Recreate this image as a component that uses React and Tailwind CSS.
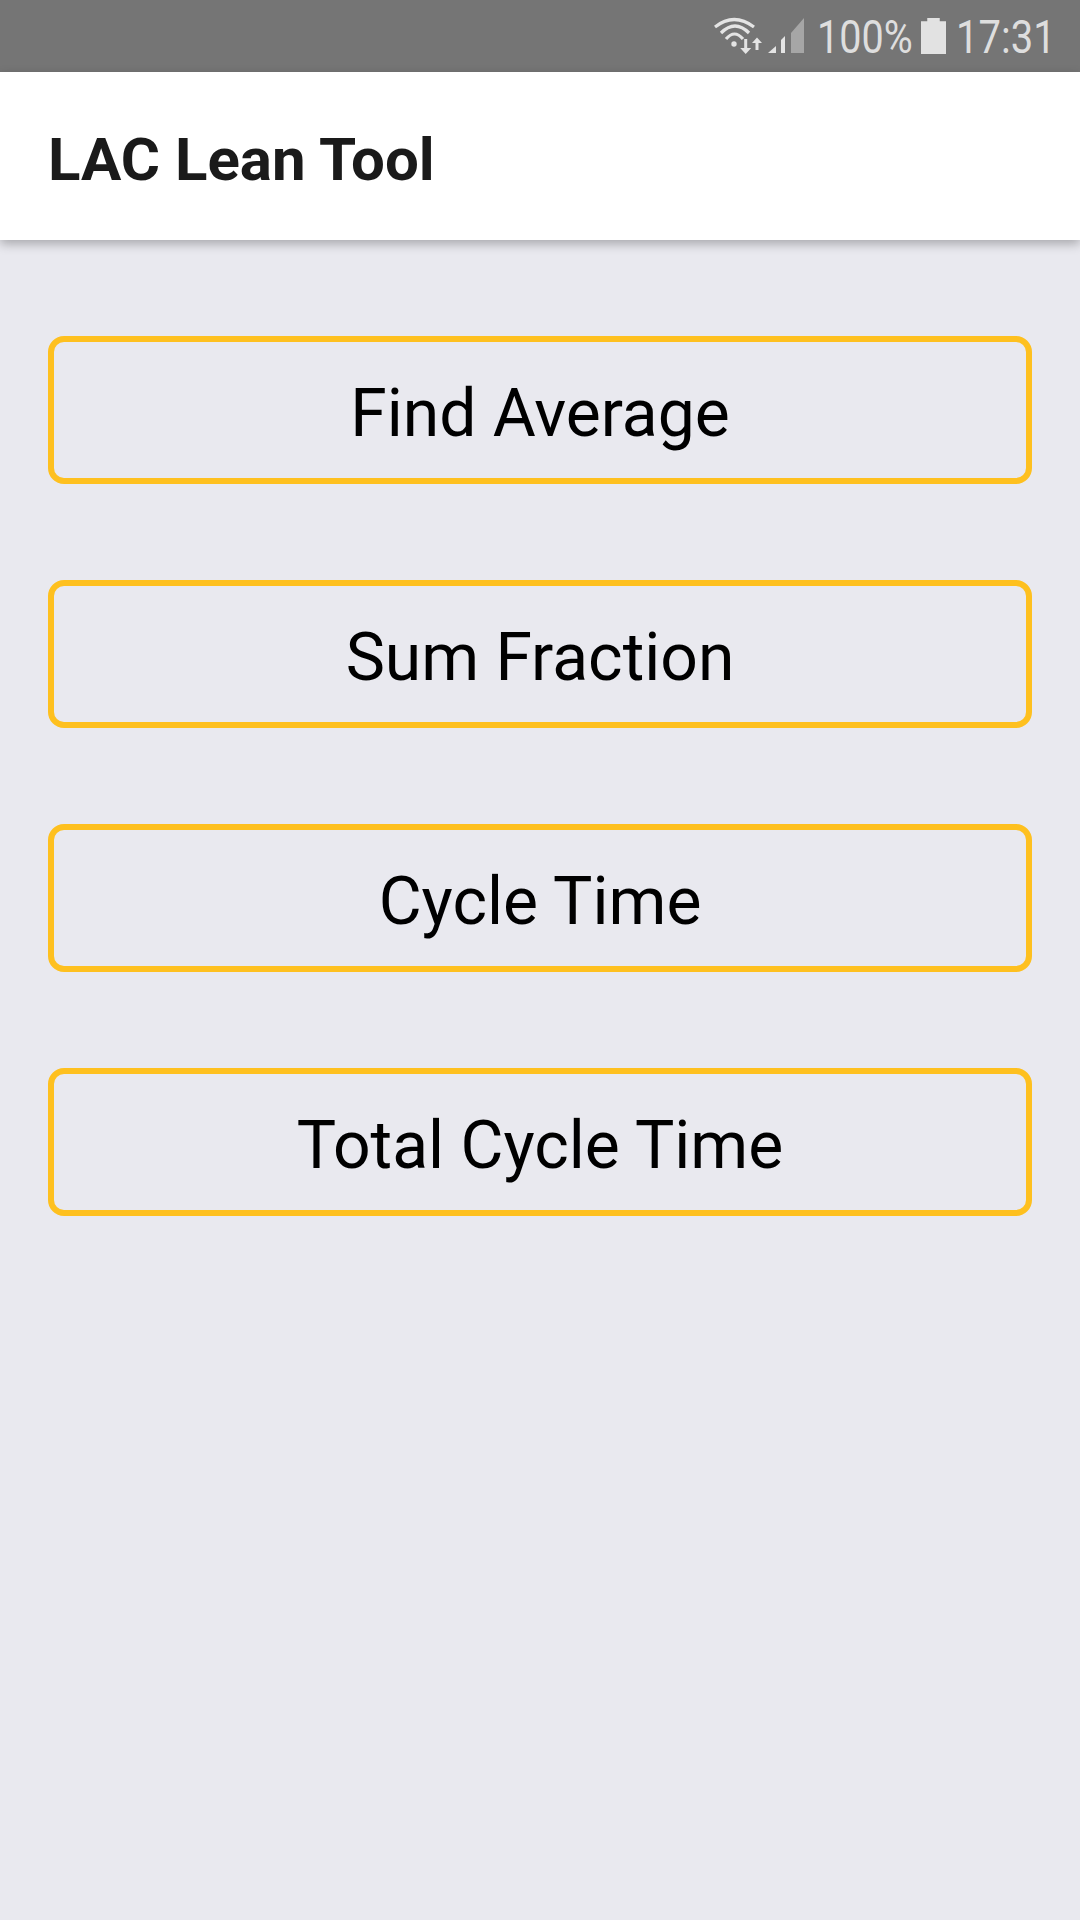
const items = ["Find Average", "Sum Fraction", "Cycle Time", "Total Cycle Time"];

function StatusIcons() {
  return (
    <svg width="93" height="38" viewBox="0 0 93 38" fill="none" className="mr-[12px] shrink-0">
      {/* wifi arcs */}
      <path d="M3 10 Q22 -5 42 10" stroke="#e4e4e4" strokeWidth="3.2" />
      <path d="M9 16 Q23 2 37 16" stroke="#e4e4e4" strokeWidth="3.2" />
      <path d="M14 22 Q22.5 12 31 22" stroke="#e4e4e4" strokeWidth="3.2" />
      <circle cx="22" cy="27" r="2.7" fill="#e4e4e4" />
      {/* data arrows */}
      <path d="M32.2 22 h3 v9 h4 l-5.5 6 l-5.5 -6 h4 z" fill="#e4e4e4" />
      <path d="M46.5 33 h-3 v-7 h-3.5 l5 -5.5 l5 5.5 h-3.5 z" fill="#e4e4e4" />
      {/* signal */}
      <path d="M56 36 L64 29 V36 Z" fill="#e4e4e4" />
      <path d="M69 23 L73 19 V36 H69 Z" fill="#e4e4e4" />
      <path d="M79 16 L92 1 V36 H79 Z" fill="#a6a6a6" />
    </svg>
  );
}

export default function App() {
  return (
    <div className="min-h-[1920px] w-[1080px] bg-[#e9e9ef]" style={{ fontFamily: "Roboto, sans-serif" }}>
      <div className="flex h-[72px] items-center justify-end bg-[#757575] pr-[30px] text-[#dedede]">
        <StatusIcons />
        <span className="inline-block w-[96px] origin-left scale-x-[0.86] whitespace-nowrap pt-[2px] text-[46px] font-normal leading-none">100%</span>
        <div className="mr-[10px] ml-[8px] h-[36px] w-[25px] shrink-0 bg-[#e2e2e2] [clip-path:polygon(25%_0,75%_0,75%_9%,100%_9%,100%_100%,0_100%,0_9%,25%_9%)]" />
        <span className="inline-block w-[94px] origin-left scale-x-[0.87] whitespace-nowrap pt-[2px] text-[46px] font-normal leading-none">17:31</span>
      </div>

      <div className="relative flex h-[168px] items-center bg-white pl-[48px] pt-[7px] shadow-[0_4px_10px_rgba(0,0,0,0.28)]">
        <h1 className="text-[60px] font-bold leading-none text-[#1a1a1a]">LAC Lean Tool</h1>
      </div>

      <div className="flex flex-col gap-[96px] px-[48px] pt-[96px]">
        {items.map((item) => (
          <button
            key={item}
            className="flex h-[148px] w-full items-center justify-center rounded-[16px] border-[6px] border-[#fec01f] pt-[8px] text-[66px] leading-none text-black"
          >
            {item}
          </button>
        ))}
      </div>
    </div>
  );
}
